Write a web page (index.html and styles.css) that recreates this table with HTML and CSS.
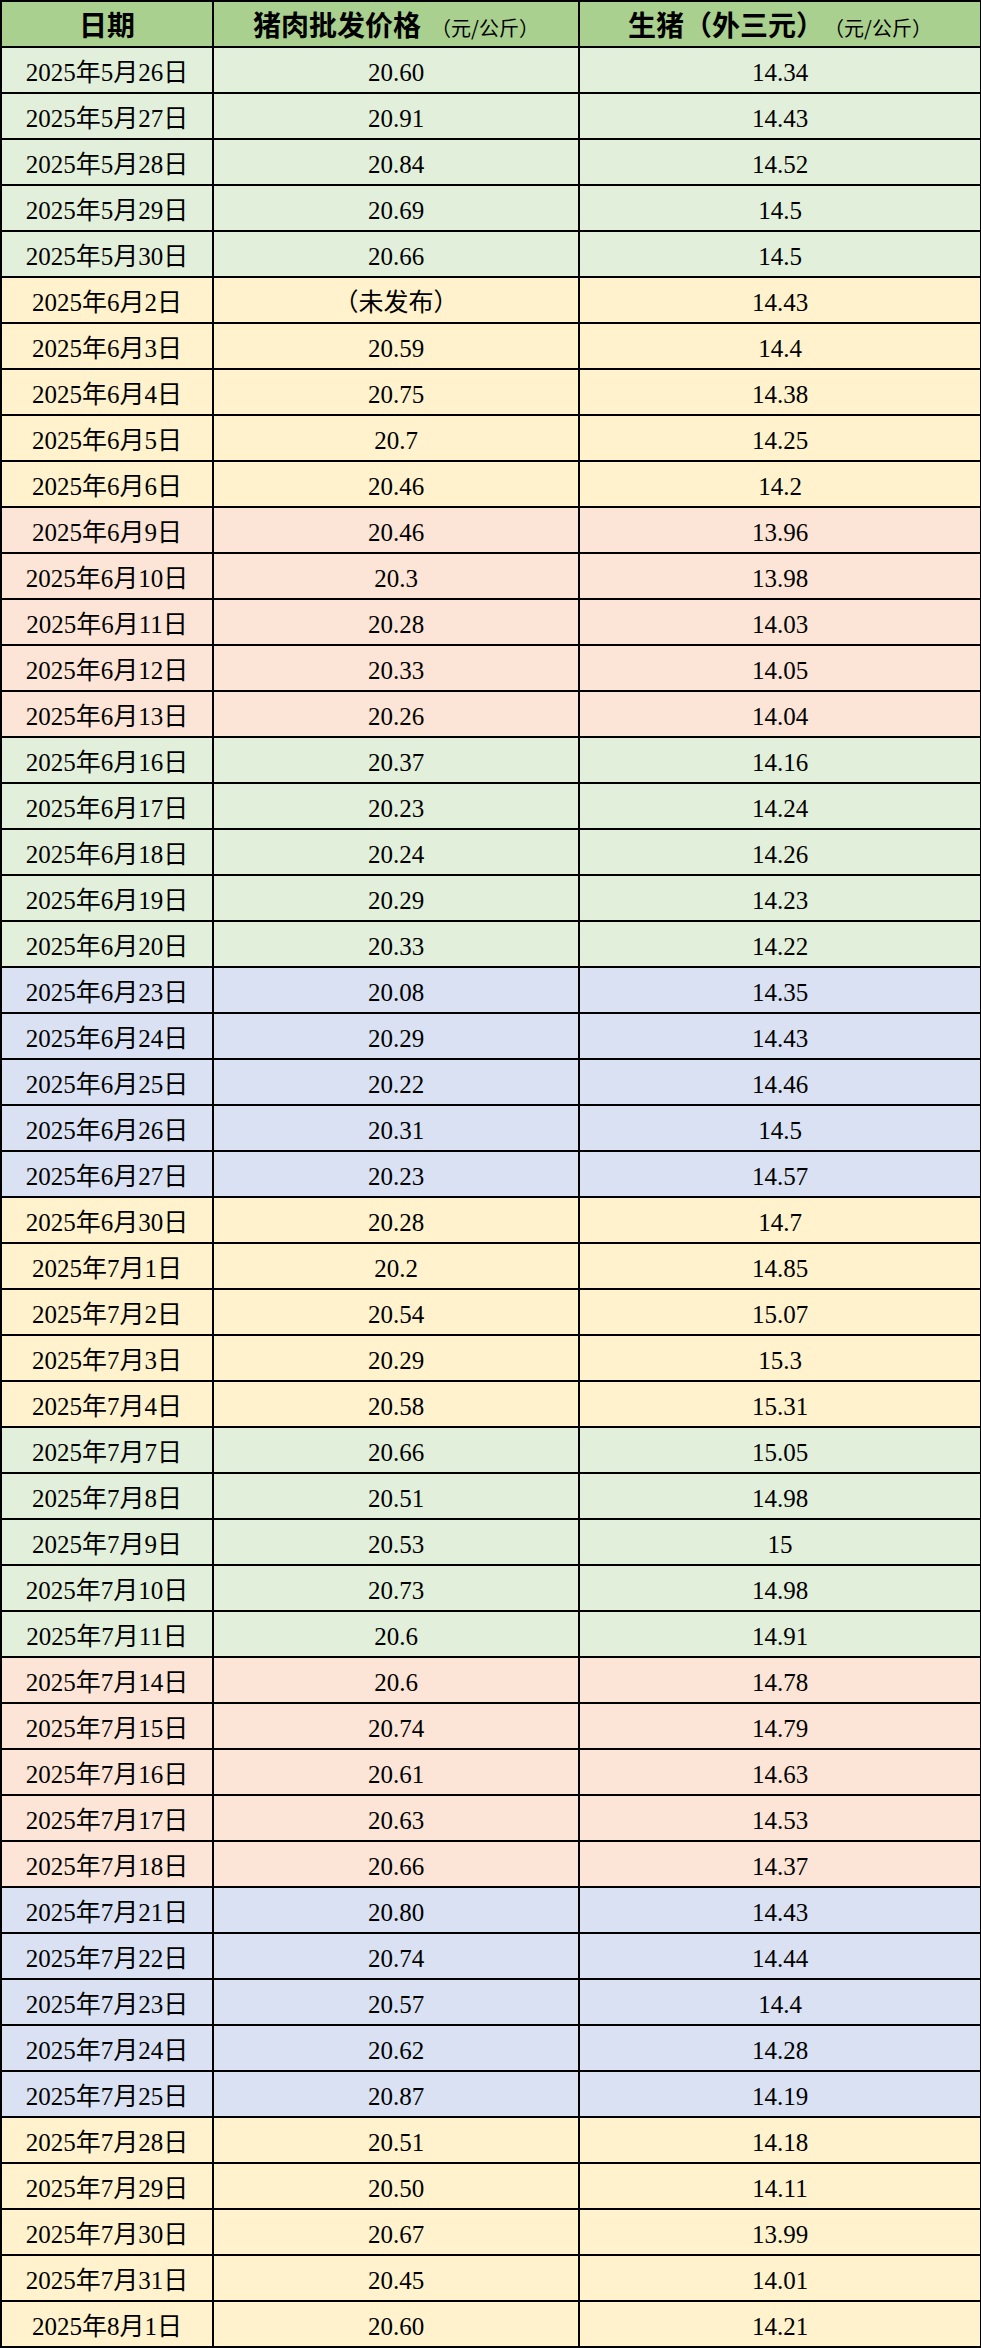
FILE: index.html
```html
<!DOCTYPE html>
<html lang="zh">
<head>
<meta charset="utf-8">
<title>猪肉价格</title>
<link rel="stylesheet" href="styles.css">
</head>
<body>
<table class="price-table">
<colgroup><col class="c1"><col class="c2"><col class="c3"></colgroup>
<thead>
<tr class="head"><th>日期</th><th>猪肉批发价格<span class="unit">（元/公斤）</span></th><th>生猪（外三元）<span class="unit">（元/公斤）</span></th></tr>
</thead>
<tbody>
<tr class="g"><td>2025年5月26日</td><td>20.60</td><td>14.34</td></tr>
<tr class="g"><td>2025年5月27日</td><td>20.91</td><td>14.43</td></tr>
<tr class="g"><td>2025年5月28日</td><td>20.84</td><td>14.52</td></tr>
<tr class="g"><td>2025年5月29日</td><td>20.69</td><td>14.5</td></tr>
<tr class="g"><td>2025年5月30日</td><td>20.66</td><td>14.5</td></tr>
<tr class="y"><td>2025年6月2日</td><td>（未发布）</td><td>14.43</td></tr>
<tr class="y"><td>2025年6月3日</td><td>20.59</td><td>14.4</td></tr>
<tr class="y"><td>2025年6月4日</td><td>20.75</td><td>14.38</td></tr>
<tr class="y"><td>2025年6月5日</td><td>20.7</td><td>14.25</td></tr>
<tr class="y"><td>2025年6月6日</td><td>20.46</td><td>14.2</td></tr>
<tr class="p"><td>2025年6月9日</td><td>20.46</td><td>13.96</td></tr>
<tr class="p"><td>2025年6月10日</td><td>20.3</td><td>13.98</td></tr>
<tr class="p"><td>2025年6月11日</td><td>20.28</td><td>14.03</td></tr>
<tr class="p"><td>2025年6月12日</td><td>20.33</td><td>14.05</td></tr>
<tr class="p"><td>2025年6月13日</td><td>20.26</td><td>14.04</td></tr>
<tr class="g"><td>2025年6月16日</td><td>20.37</td><td>14.16</td></tr>
<tr class="g"><td>2025年6月17日</td><td>20.23</td><td>14.24</td></tr>
<tr class="g"><td>2025年6月18日</td><td>20.24</td><td>14.26</td></tr>
<tr class="g"><td>2025年6月19日</td><td>20.29</td><td>14.23</td></tr>
<tr class="g"><td>2025年6月20日</td><td>20.33</td><td>14.22</td></tr>
<tr class="b"><td>2025年6月23日</td><td>20.08</td><td>14.35</td></tr>
<tr class="b"><td>2025年6月24日</td><td>20.29</td><td>14.43</td></tr>
<tr class="b"><td>2025年6月25日</td><td>20.22</td><td>14.46</td></tr>
<tr class="b"><td>2025年6月26日</td><td>20.31</td><td>14.5</td></tr>
<tr class="b"><td>2025年6月27日</td><td>20.23</td><td>14.57</td></tr>
<tr class="y"><td>2025年6月30日</td><td>20.28</td><td>14.7</td></tr>
<tr class="y"><td>2025年7月1日</td><td>20.2</td><td>14.85</td></tr>
<tr class="y"><td>2025年7月2日</td><td>20.54</td><td>15.07</td></tr>
<tr class="y"><td>2025年7月3日</td><td>20.29</td><td>15.3</td></tr>
<tr class="y"><td>2025年7月4日</td><td>20.58</td><td>15.31</td></tr>
<tr class="g"><td>2025年7月7日</td><td>20.66</td><td>15.05</td></tr>
<tr class="g"><td>2025年7月8日</td><td>20.51</td><td>14.98</td></tr>
<tr class="g"><td>2025年7月9日</td><td>20.53</td><td>15</td></tr>
<tr class="g"><td>2025年7月10日</td><td>20.73</td><td>14.98</td></tr>
<tr class="g"><td>2025年7月11日</td><td>20.6</td><td>14.91</td></tr>
<tr class="p"><td>2025年7月14日</td><td>20.6</td><td>14.78</td></tr>
<tr class="p"><td>2025年7月15日</td><td>20.74</td><td>14.79</td></tr>
<tr class="p"><td>2025年7月16日</td><td>20.61</td><td>14.63</td></tr>
<tr class="p"><td>2025年7月17日</td><td>20.63</td><td>14.53</td></tr>
<tr class="p"><td>2025年7月18日</td><td>20.66</td><td>14.37</td></tr>
<tr class="b"><td>2025年7月21日</td><td>20.80</td><td>14.43</td></tr>
<tr class="b"><td>2025年7月22日</td><td>20.74</td><td>14.44</td></tr>
<tr class="b"><td>2025年7月23日</td><td>20.57</td><td>14.4</td></tr>
<tr class="b"><td>2025年7月24日</td><td>20.62</td><td>14.28</td></tr>
<tr class="b"><td>2025年7月25日</td><td>20.87</td><td>14.19</td></tr>
<tr class="y"><td>2025年7月28日</td><td>20.51</td><td>14.18</td></tr>
<tr class="y"><td>2025年7月29日</td><td>20.50</td><td>14.11</td></tr>
<tr class="y"><td>2025年7月30日</td><td>20.67</td><td>13.99</td></tr>
<tr class="y"><td>2025年7月31日</td><td>20.45</td><td>14.01</td></tr>
<tr class="y"><td>2025年8月1日</td><td>20.60</td><td>14.21</td></tr>
</tbody>
</table>
</body>
</html>
```
FILE: styles.css
```css
html, body {
  margin: 0;
  padding: 0;
  background: #ffffff;
}

.price-table {
  width: 980px;
  table-layout: fixed;
  border-collapse: collapse;
  font-family: "Liberation Serif", "Noto Sans CJK SC", serif;
  color: #000;
}

.c1 { width: 212px; }
.c2 { width: 366px; }
.c3 { width: 402px; }

.price-table th,
.price-table td {
  border: 2px solid #000;
  text-align: center;
  vertical-align: middle;
  padding: 0;
  line-height: 1;
  white-space: nowrap;
}

.price-table th {
  background: #a9d08e;
  font-family: "Noto Sans CJK SC", sans-serif;
  font-weight: 700;
  font-size: 28px;
  height: 44px;
}

.price-table .unit {
  font-weight: 400;
  font-size: 20px;
  margin-left: 10px;
}

.price-table td {
  font-size: 25px;
  padding-top: 4px;
  height: 40px;
}

.g td { background: #e2efda; }
.y td { background: #fff2cc; }
.p td { background: #fce4d6; }
.b td { background: #d9e1f2; }
```
